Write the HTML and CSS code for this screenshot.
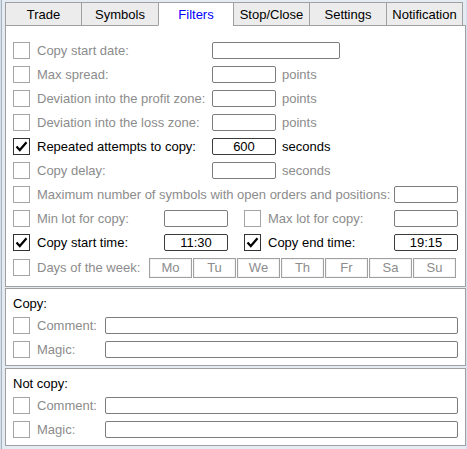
FILE: index.html
```html
<!DOCTYPE html>
<html>
<head>
<meta charset="utf-8">
<link rel="stylesheet" href="styles.css">
</head>
<body>
<div class="window">
  <div class="tabs">
    <div class="tab t76">Trade</div>
    <div class="tab t77">Symbols</div>
    <div class="tab t75 active">Filters</div>
    <div class="tab t76">Stop/Close</div>
    <div class="tab t77">Settings</div>
    <div class="tab t76 last">Notification</div>
    <div class="tab-fill"></div>
  </div>

  <div class="panel main">
    <div class="row">
      <span class="cb"></span><span class="lbl w175 dis">Copy start date:</span><span class="field w128"></span>
    </div>
    <div class="row">
      <span class="cb"></span><span class="lbl w175 dis">Max spread:</span><span class="field w64"></span><span class="unit dis">points</span>
    </div>
    <div class="row">
      <span class="cb"></span><span class="lbl w175 dis">Deviation into the profit zone:</span><span class="field w64"></span><span class="unit dis">points</span>
    </div>
    <div class="row">
      <span class="cb"></span><span class="lbl w175 dis">Deviation into the loss zone:</span><span class="field w64"></span><span class="unit dis">points</span>
    </div>
    <div class="row">
      <span class="cb on"><svg viewBox="0 0 15 15" width="15" height="15"><path d="M2.5 7.5 L5.8 11 L12.5 3.2" fill="none" stroke="#000" stroke-width="2.2"/></svg></span><span class="lbl w175">Repeated attempts to copy:</span><span class="field w64 act">600</span><span class="unit">seconds</span>
    </div>
    <div class="row">
      <span class="cb"></span><span class="lbl w175 dis">Copy delay:</span><span class="field w64"></span><span class="unit dis">seconds</span>
    </div>
    <div class="row">
      <span class="cb"></span><span class="lbl w357 dis">Maximum number of symbols with open orders and positions:</span><span class="field w64"></span>
    </div>
    <div class="row">
      <span class="cb"></span><span class="lbl w127 dis">Min lot for copy:</span><span class="field w64"></span>
      <span class="cb second"></span><span class="lbl w126 dis">Max lot for copy:</span><span class="field w64"></span>
    </div>
    <div class="row">
      <span class="cb on"><svg viewBox="0 0 15 15" width="15" height="15"><path d="M2.5 7.5 L5.8 11 L12.5 3.2" fill="none" stroke="#000" stroke-width="2.2"/></svg></span><span class="lbl w127">Copy start time:</span><span class="field w64 act">11:30</span>
      <span class="cb on second"><svg viewBox="0 0 15 15" width="15" height="15"><path d="M2.5 7.5 L5.8 11 L12.5 3.2" fill="none" stroke="#000" stroke-width="2.2"/></svg></span><span class="lbl w126">Copy end time:</span><span class="field w64 act">19:15</span>
    </div>
    <div class="row days">
      <span class="cb"></span><span class="lbl w112 dis">Days of the week:</span>
      <span class="day">Mo</span><span class="day">Tu</span><span class="day">We</span><span class="day">Th</span><span class="day">Fr</span><span class="day">Sa</span><span class="day">Su</span>
    </div>
  </div>

  <div class="panel sub first">
    <div class="title">Copy:</div>
    <div class="row">
      <span class="cb"></span><span class="lbl w68 dis">Comment:</span><span class="field wide"></span>
    </div>
    <div class="row">
      <span class="cb"></span><span class="lbl w68 dis">Magic:</span><span class="field wide"></span>
    </div>
  </div>

  <div class="panel sub second-panel">
    <div class="title">Not copy:</div>
    <div class="row">
      <span class="cb"></span><span class="lbl w68 dis">Comment:</span><span class="field wide"></span>
    </div>
    <div class="row">
      <span class="cb"></span><span class="lbl w68 dis">Magic:</span><span class="field wide"></span>
    </div>
  </div>
</div>
</body>
</html>
```

FILE: styles.css
```css
* { box-sizing: border-box; }

html, body {
  margin: 0;
  padding: 0;
}

body {
  width: 467px;
  height: 449px;
  background: #d3e0ef;
  font-family: "Liberation Sans", Arial, sans-serif;
  font-size: 13px;
  color: #000;
  overflow: hidden;
}

.window {
  margin-left: 1px;
  padding-top: 2px;
  padding-left: 3px;
  border-left: 1px solid #a9b1bb;
  width: 465px;
  height: 449px;
  background: #e4ebf3;
}

.tabs {
  display: flex;
  height: 24px;
}

.tab {
  height: 24px;
  border-top: 1px solid #a0a0a0;
  border-left: 1px solid #a0a0a0;
  border-bottom: 1px solid #a0a0a0;
  background: #ececec;
  text-align: center;
  line-height: 24px;
  white-space: nowrap;
}

.tab.last { border-right: 1px solid #a0a0a0; }

.tab.active {
  background: #fff;
  border-bottom-color: #fff;
  color: #0000ff;
}

.t75 { width: 75px; }
.t76 { width: 76px; }
.t77 { width: 77px; }
.tab.last { width: 77px; }

.tab-fill {
  flex: 1;
  border-bottom: 1px solid #a0a0a0;
}

.panel {
  width: 461px;
  background: #fff;
  border: 1px solid #a0a0a0;
}

.panel.main {
  border-top: none;
  padding: 12px 0 6px 0;
}

.panel.sub {
  padding: 2px 0 4px 0;
}

.panel.first { margin-top: 1px; }
.panel.second-panel { margin-top: 2px; }

.title {
  height: 22px;
  line-height: 25px;
  padding-left: 7px;
}

.row {
  display: flex;
  align-items: center;
  height: 24px;
  padding-left: 7px;
}

.row.days { height: 26px; }

.cb {
  flex: none;
  width: 17px;
  height: 17px;
  border: 1px solid #a4a4a4;
  background: #fff;
  display: flex;
  align-items: center;
  justify-content: center;
}

.cb.on { border-color: #333; }
.cb.second { margin-left: 16px; }

.lbl {
  flex: none;
  margin-left: 7px;
  white-space: nowrap;
}

.dis { color: #8c8c8c; }

.w68 { width: 68px; }
.w112 { width: 112px; }
.w126 { width: 126px; }
.w127 { width: 127px; }
.w175 { width: 175px; }
.w357 { width: 357px; }

.field {
  flex: none;
  height: 17px;
  border: 1px solid #7c7c7c;
  border-radius: 2px;
  background: #fff;
  text-align: center;
  line-height: 15px;
  color: #000;
}

.field.act { border-color: #3c3c3c; }
.field.w64 { width: 64px; }
.field.w128 { width: 128px; }
.field.wide { width: 353px; }

.unit {
  margin-left: 6px;
}

.day {
  flex: none;
  width: 43px;
  height: 20px;
  margin-right: 1px;
  border: 1px solid #a0a0a0;
  box-shadow: inset 0 0 0 1px #f4f4f4;
  color: #8c8c8c;
  text-align: center;
  line-height: 18px;
  margin-top: 2px;
}
```
